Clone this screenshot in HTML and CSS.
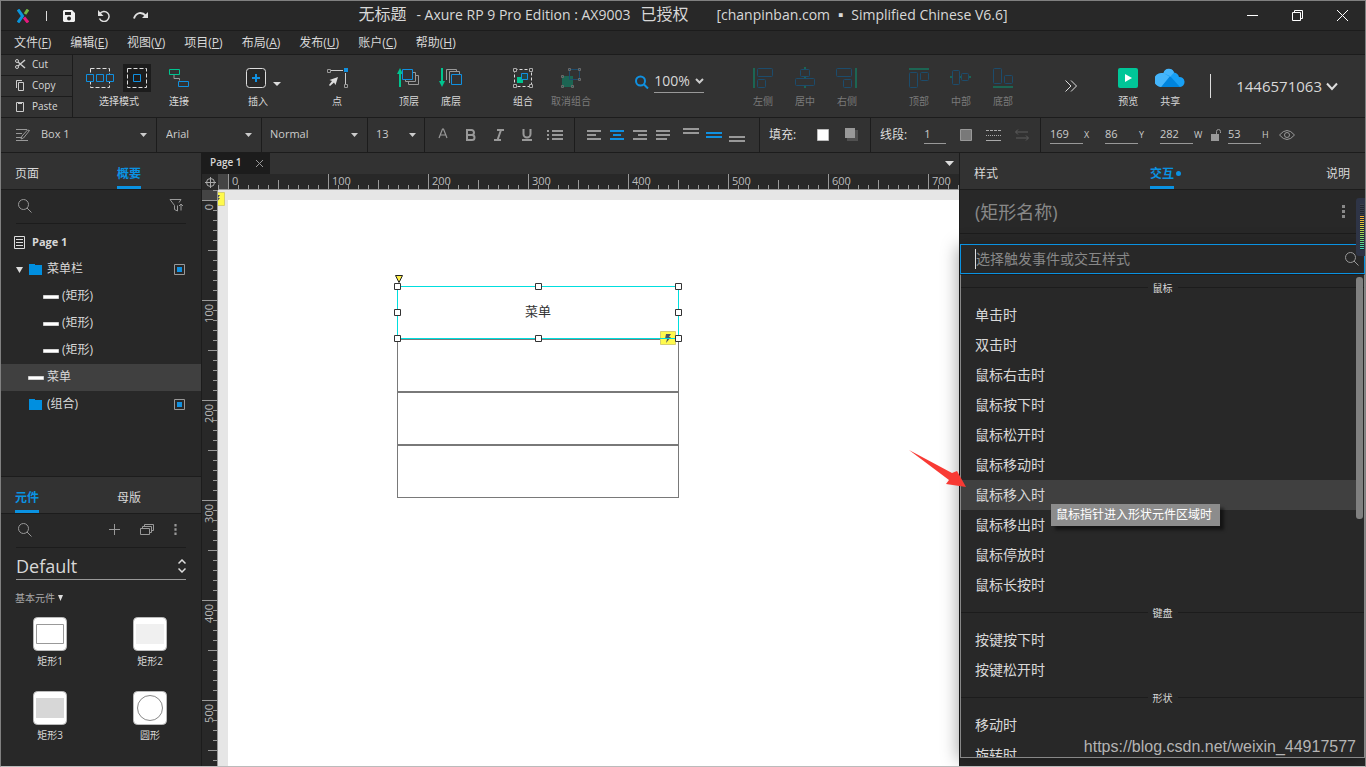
FILE: index.html
```html
<!DOCTYPE html>
<html lang="zh-CN">
<head>
<meta charset="utf-8">
<title>无标题 - Axure RP 9 Pro Edition</title>
<link rel="stylesheet" href="styles.css">
</head>
<body>
<svg class="defs" width="0" height="0" aria-hidden="true">
  <symbol id="search" viewBox="0 0 14 14"><circle cx="5.500" cy="5.500" r="5" fill="none" stroke="currentColor"/><path d="M9 9l4.500 4.500" stroke="currentColor" fill="none"/></symbol>
  <symbol id="caret" viewBox="0 0 7 4"><path d="M0 0h7L3.500 4z" fill="currentColor"/></symbol>
  <symbol id="dots" viewBox="0 0 3 13"><path d="M0 0h3v3H0zM0 5h3v3H0zM0 10h3v3H0z" fill="currentColor"/></symbol>
  <symbol id="folder" viewBox="0 0 13 11"><path d="M0 0h6v1h7v10H0z" fill="#008fe0"/></symbol>
  <symbol id="bar" viewBox="0 0 16 4"><path d="M.5.5h15v3H.5z" fill="#fff" stroke="#d0d0d0"/></symbol>
  <symbol id="bolt" viewBox="0 0 16 14"><path d="M.5.5h15v13H.5z" fill="#fffa4d" stroke="#d6cf70"/><path d="M6 3h5L9 6h2l-5 6 1-4H5z" fill="#4d5560"/></symbol>
  <symbol id="vis" viewBox="0 0 11 11"><path d="M.5.5h10v10H.5z" fill="none" stroke="#999"/><path d="M3 3h5v5H3z" fill="#1090e0"/></symbol>
</svg>

<header class="titlebar">
  <div class="quick">
    <svg class="logo" width="12" height="14" viewBox="0 0 12 14" fill="none" stroke-width="3"><path d="M1 .5l4.500 6.500L1 13.500" stroke="#0a95dc"/><path d="M11 .5L8 5" stroke="#6fb43f"/><path d="M7 8.500l4 5" stroke="#e5187d"/></svg>
    <span class="quick-line"></span>
    <button class="plain" aria-label="保存"><svg width="12" height="12" viewBox="0 0 12 12"><path fill="#f0f0f0" fill-rule="evenodd" d="M1 0h8l3 3v8l-1 1H1l-1-1V1zM2 2v3h6V2zM6 6.500a2 2 0 1 0 0 4 2 2 0 0 0 0-4z"/></svg></button>
    <button class="plain" aria-label="撤销"><svg width="12" height="12" viewBox="0 0 12 12"><path d="M2 3.500a5 5 0 1 1-.5 5" fill="none" stroke="#e0e0e0" stroke-width="1.500"/><path d="M0 0v6h5.500z" fill="#e0e0e0"/></svg></button>
    <button class="plain" aria-label="重做"><svg width="16" height="9" viewBox="0 0 16 9"><path d="M1 7.500C3 1 9 .5 13 5" fill="none" stroke="#e0e0e0" stroke-width="2"/><path d="M15 1v6H9z" fill="#e0e0e0"/></svg></button>
  </div>
  <h1><span class="zh">无标题</span><span>- Axure RP 9 Pro Edition : AX9003</span><span class="zh">已授权</span><span class="build">[chanpinban.com ▪ Simplified Chinese V6.6]</span></h1>
  <div class="winbtns">
    <button class="plain" aria-label="最小化"><svg width="11" height="11"><path d="M0 5.500h11" stroke="#fff"/></svg></button>
    <button class="plain" aria-label="还原"><svg width="11" height="11" fill="none" stroke="#fff"><path d="M.5 2.500h8v8h-8zM2.500 2.500v-2h8v8h-2"/></svg></button>
    <button class="plain" aria-label="关闭"><svg width="11" height="11" stroke="#fff"><path d="M0 0l11 11M11 0L0 11"/></svg></button>
  </div>
</header>

<nav class="menubar">
  <button class="plain">文件(<u>F</u>)</button>
  <button class="plain">编辑(<u>E</u>)</button>
  <button class="plain">视图(<u>V</u>)</button>
  <button class="plain">项目(<u>P</u>)</button>
  <button class="plain">布局(<u>A</u>)</button>
  <button class="plain">发布(<u>U</u>)</button>
  <button class="plain">账户(<u>C</u>)</button>
  <button class="plain">帮助(<u>H</u>)</button>
</nav>

<div class="toolbar">
  <div class="clip">
    <button class="plain"><svg width="11" height="10" viewBox="0 0 11 10" fill="none" stroke="#ccc"><path d="M3 3l7 6M3 7l7-6" stroke-width="1.500"/><circle cx="2" cy="2" r="1.500"/><circle cx="2" cy="8" r="1.500"/></svg>Cut</button>
    <button class="plain"><svg width="11" height="11" viewBox="0 0 11 11" fill="none" stroke="#ccc"><path d="M3.500 2.500h5v8h-5zM1.500 8V.5H7"/></svg>Copy</button>
    <button class="plain"><svg width="11" height="11" viewBox="0 0 11 11" fill="none" stroke="#ccc"><path d="M1.500 1.500h7v9h-7z"/><path d="M3 2h4" stroke-width="2"/></svg>Paste</button>
  </div>
  <div class="tools">
    <div class="set set-select">
      <div class="tool-double">
        <div class="pair">
          <button class="plain" aria-label="相交选中"><svg width="30" height="30" viewBox="0 0 30 30" fill="none"><rect x="5.500" y="5.500" width="19" height="19" stroke="#ddd" stroke-dasharray="4 2"/><path d="M1.500 11.500h7v7h-7zM11.500 11.500h7v7h-7zM21.500 11.500h7v7h-7z" fill="#323232" stroke="#1090e0"/></svg></button>
          <button class="plain" aria-label="包含选中"><svg width="30" height="30" viewBox="0 0 30 30" fill="none"><path d="M1 1h28v28H1z" fill="#1c1c1c"/><rect x="5.500" y="5.500" width="19" height="19" stroke="#ddd" stroke-dasharray="4 2"/><path d="M11.500 11.500h7v7h-7z" stroke="#1090e0"/></svg></button>
        </div>
        <span>选择模式</span>
      </div>
      <button class="tool"><svg width="30" height="30" viewBox="0 0 30 30" fill="none"><path d="M10 11.500v4h5.500v2" stroke="#999"/><path d="M5.500 6.500h10v5h-10z" stroke="#00c48f"/><path d="M14.500 18.500h10v5h-10z" stroke="#1090e0"/></svg>连接</button>
    </div>
    <button class="tool tool-wide"><svg width="56" height="30" viewBox="0 0 56 30"><rect x="16.500" y="5.500" width="19" height="19" rx="3" fill="#282828" stroke="#ddd"/><path d="M22 15h8M26 11v8" stroke="#1090e0" stroke-width="2"/><path d="M43 19h8l-4 4z" fill="#ddd"/></svg>插入</button>
    <button class="tool"><svg width="30" height="30" viewBox="0 0 30 30" fill="none"><path d="M8 7.500h13M23.500 10v12" stroke="#ccc"/><path d="M5.500 6.500h3v3h-3zM22.500 21.500h3v3h-3z" stroke="#999"/><path d="M22 5h4v4h-4z" fill="#1090e0"/><path d="M16 14l-2.500 8-1.500-2.500-4 3.500-1-1 3-4-2.500-1z" fill="#ddd"/></svg>点</button>
    <div class="set">
      <button class="tool"><svg width="30" height="30" viewBox="0 0 30 30" fill="none"><path d="M6 24V9" stroke="#00c48f" stroke-width="2"/><path d="M3 11l3-6 3 6z" fill="#00c48f"/><path d="M21 12.500h3.500v9h-10V19M18 9.500h3.500v9h-10V16" stroke="#999"/><path d="M8.500 6.500h10v10h-10z" fill="#323232" stroke="#1090e0"/></svg>顶层</button>
      <button class="tool"><svg width="30" height="30" viewBox="0 0 30 30" fill="none"><path d="M6 5v15" stroke="#00c48f" stroke-width="2"/><path d="M3 18l3 6 3-6z" fill="#00c48f"/><path d="M10.500 17V6.500h10V9M13.500 20V8.500h10V11" stroke="#999"/><path d="M15.500 11.500h10v10h-10z" fill="#323232" stroke="#1090e0"/></svg>底层</button>
    </div>
    <div class="set set-group">
      <button class="tool"><svg width="30" height="30" viewBox="0 0 30 30" fill="none"><rect x="6.500" y="6.500" width="17" height="17" stroke="#ddd" stroke-dasharray="3 2"/><path d="M5.500 5.500h3v3h-3zM21.500 5.500h3v3h-3zM5.500 21.500h3v3h-3zM21.500 21.500h3v3h-3z" fill="#323232" stroke="#aaa"/><path d="M9 14h6v6H9z" fill="#00c48f"/><path d="M13.500 10.500h6v6h-6z" fill="#244" stroke="#1090e0"/></svg>组合</button>
      <button class="tool off"><svg width="30" height="30" viewBox="0 0 30 30" fill="none"><path d="M6 13h11v11H6z" fill="#1c6553"/><path d="M13.500 6.500h10v10h-10z" stroke="#1c4c6c"/><path d="M12.500 5.500h2v2h-2zM22.500 5.500h2v2h-2zM22.500 15.500h2v2h-2zM5.500 12.500h2v2h-2zM5.500 22.500h2v2h-2zM15.500 22.500h2v2h-2z" stroke="#6a6a6a"/></svg>取消组合</button>
    </div>
    <div class="zoom">
      <svg width="14" height="14" viewBox="0 0 14 14" fill="none" stroke="#1090e0" stroke-width="2"><circle cx="5.500" cy="6" r="4.500"/><path d="M9 9.500l4 4"/></svg>
      <button class="plain zoom-val">100%<svg width="9" height="6" viewBox="0 0 9 6"><path d="M1 1l3.500 3.500L8 1" fill="none" stroke="#ccc" stroke-width="2"/></svg></button>
    </div>
    <div class="set">
      <button class="tool off"><svg width="30" height="30" viewBox="0 0 30 30" fill="none" stroke="#1c4c6c"><path d="M6 5v20" stroke="#1c6553" stroke-width="2"/><rect x="9.500" y="5.500" width="15" height="8" rx="1"/><rect x="9.500" y="16.500" width="8" height="8" rx="1"/></svg>左侧</button>
      <button class="tool off"><svg width="30" height="30" viewBox="0 0 30 30" fill="none" stroke="#1c4c6c"><path d="M15 4v3M15 13v3M15 22v3" stroke="#1c6553" stroke-width="2"/><rect x="10.500" y="6.500" width="9" height="7" rx="1"/><rect x="5.500" y="15.500" width="19" height="7" rx="1"/></svg>居中</button>
      <button class="tool off"><svg width="30" height="30" viewBox="0 0 30 30" fill="none" stroke="#1c4c6c"><path d="M24 5v20" stroke="#1c6553" stroke-width="2"/><rect x="4.500" y="5.500" width="15" height="8" rx="1"/><rect x="11.500" y="16.500" width="8" height="8" rx="1"/></svg>右侧</button>
    </div>
    <div class="set">
      <button class="tool off"><svg width="30" height="30" viewBox="0 0 30 30" fill="none" stroke="#1c4c6c"><path d="M5 6h20" stroke="#1c6553" stroke-width="2"/><rect x="5.500" y="9.500" width="8" height="15" rx="1"/><rect x="16.500" y="9.500" width="8" height="8" rx="1"/></svg>顶部</button>
      <button class="tool off"><svg width="30" height="30" viewBox="0 0 30 30" fill="none" stroke="#1c4c6c"><path d="M4 14h3M13 14h3M22 14h3" stroke="#1c6553" stroke-width="2"/><rect x="6.500" y="7.500" width="7" height="14" rx="1"/><rect x="15.500" y="10.500" width="7" height="7" rx="1"/></svg>中部</button>
      <button class="tool off"><svg width="30" height="30" viewBox="0 0 30 30" fill="none" stroke="#1c4c6c"><path d="M5 24h20" stroke="#1c6553" stroke-width="2"/><rect x="5.500" y="5.500" width="8" height="15" rx="1"/><rect x="16.500" y="12.500" width="8" height="8" rx="1"/></svg>底部</button>
    </div>
    <button class="plain more" aria-label="更多"><svg width="12" height="12" viewBox="0 0 12 12" fill="none" stroke="#ddd"><path d="M.5.5L6 6 .5 11.500M6 .5L11.500 6 6 11.500"/></svg></button>
    <div class="set set-share">
      <button class="tool"><svg width="30" height="30" viewBox="0 0 30 30"><rect x="5" y="5" width="20" height="20" rx="2" fill="#00c698"/><path d="M12 11v8l7-4z" fill="#fff"/></svg>预览</button>
      <button class="tool"><svg width="30" height="30" viewBox="0 0 30 30"><path d="M6 24a6 6 0 0 1 .5-13.500h2A5.500 5.500 0 0 1 19 9.500a6 6 0 0 1 5 4.500 5 5 0 0 1 1 10z" fill="#18a0f5"/><path d="M6 24L15 13l10 11z" fill="#0084dd"/><path d="M6 24L15 13l-6.500-3h-2A6 6 0 0 0 6 24zM8.500 10A5.500 5.500 0 0 1 19 9.500L15 14z" fill="#45b5fb"/></svg>共享</button>
    </div>
    <span class="rule"></span>
    <button class="plain account">1446571063<svg width="12" height="9" viewBox="0 0 12 9"><path d="M1 1.500L6 7l5-5.500" fill="none" stroke="#ddd" stroke-width="2"/></svg></button>
  </div>
</div>

<div class="props">
  <div class="cell cell-style">
    <svg width="16" height="14" viewBox="0 0 16 14" fill="none" stroke="#999"><path d="M1 1.500h11M1 5.500h6M1 9.500h5M1 12.500h12M14.500 2.500l-6 7.500-2.500 1 1-3 5.500-6z"/></svg>
    <select aria-label="样式"><option>Box 1</option></select><svg class="caret" width="7" height="4"><use href="#caret"/></svg>
  </div>
  <div class="cell cell-font"><select aria-label="字体"><option>Arial</option></select><svg class="caret" width="7" height="4"><use href="#caret"/></svg></div>
  <div class="cell cell-font"><select aria-label="字形"><option>Normal</option></select><svg class="caret" width="7" height="4"><use href="#caret"/></svg></div>
  <div class="cell cell-size"><select aria-label="字号"><option>13</option></select><svg class="caret" width="7" height="4"><use href="#caret"/></svg></div>
  <div class="cell cell-fmt">
    <button class="plain" aria-label="颜色"><svg width="16" height="14" viewBox="0 0 16 14"><path d="M4 10L7.500 1h1L12 10M5.500 7h5" fill="none" stroke="#999" stroke-width="1.200"/></svg></button>
    <button class="plain" aria-label="粗体"><svg width="16" height="14" viewBox="0 0 16 14"><path d="M4 2h4.500a2.500 2.500 0 0 1 0 5H4h5a2.500 2.500 0 0 1 0 5H4z" fill="none" stroke="#999" stroke-width="2"/></svg></button>
    <button class="plain" aria-label="斜体"><svg width="16" height="14" viewBox="0 0 16 14"><path d="M6 2h7M3 12h7M10 2L6.500 12" fill="none" stroke="#999" stroke-width="2"/></svg></button>
    <button class="plain" aria-label="下划线"><svg width="16" height="14" viewBox="0 0 16 14"><path d="M4.500 1v5a3.500 3.500 0 0 0 7 0V1M3 12h10" fill="none" stroke="#999" stroke-width="2"/></svg></button>
    <button class="plain" aria-label="列表"><svg width="16" height="14" viewBox="0 0 16 14"><path d="M5 3h11M5 7h11M5 11h11" stroke="#999" stroke-width="2"/><path d="M0 2h2v2H0zM0 6h2v2H0zM0 10h2v2H0z" fill="#999"/></svg></button>
  </div>
  <div class="cell cell-align">
    <button class="plain" aria-label="左对齐"><svg width="16" height="14" stroke="#999" stroke-width="2"><path d="M1 3h14M1 7h9M1 11h14"/></svg></button>
    <button class="plain" aria-label="居中对齐"><svg width="16" height="14" stroke="#1090e0" stroke-width="2"><path d="M1 3h14M4 7h8M1 11h14"/></svg></button>
    <button class="plain" aria-label="右对齐"><svg width="16" height="14" stroke="#999" stroke-width="2"><path d="M1 3h14M6 7h9M1 11h14"/></svg></button>
    <button class="plain" aria-label="两端对齐"><svg width="16" height="14" stroke="#999" stroke-width="2"><path d="M1 3h14M1 7h14M1 11h11"/></svg></button>
    <button class="plain gap" aria-label="顶端"><svg width="16" height="14" stroke="#999" stroke-width="2"><path d="M0 1h16M0 5h16"/></svg></button>
    <button class="plain" aria-label="居中"><svg width="16" height="14" stroke="#1090e0" stroke-width="2"><path d="M0 5h16M0 9h16"/></svg></button>
    <button class="plain" aria-label="底端"><svg width="16" height="14" stroke="#999" stroke-width="2"><path d="M0 9h16M0 13h16"/></svg></button>
  </div>
  <div class="cell cell-fill">
    <span class="lbl">填充:</span>
    <button class="plain" aria-label="填充颜色"><svg width="12" height="12"><path d="M.5.5h11v11H.5z" fill="#fff" stroke="#bbb"/></svg></button>
    <button class="plain" aria-label="阴影"><svg width="14" height="14"><path d="M2 2h11v11H2z" fill="#505050"/><path d="M0 0h10v10H0z" fill="#999"/></svg></button>
  </div>
  <div class="cell cell-line">
    <label class="lbl" for="lw">线段:</label>
    <input id="lw" class="num num-sm" value="1">
    <button class="plain" aria-label="线段颜色"><svg width="12" height="12"><path d="M.5.5h11v11H.5z" fill="#797979" stroke="#999"/></svg></button>
    <button class="plain" aria-label="线型"><svg width="15" height="11" stroke="#aaa"><path d="M0 .5h15" stroke-dasharray="3 1"/><path d="M0 5.500h15" stroke-dasharray="1 1"/><path d="M0 10.500h15"/></svg></button>
    <button class="plain" aria-label="箭头"><svg width="14" height="12" fill="none" stroke="#5c5c5c"><path d="M3 .5L.5 3 3 5.500M1 3h12M11 6.500L13.500 9 11 11.500M1 9h12"/></svg></button>
  </div>
  <div class="cell cell-pos">
    <div class="coord"><input id="px" class="num" value="169"><label for="px">X</label></div>
    <div class="coord"><input id="py" class="num" value="86"><label for="py">Y</label></div>
    <div class="coord"><input id="pw" class="num" value="282"><label for="pw">W</label></div>
    <button class="plain lock" aria-label="锁定比例"><svg width="10" height="12" viewBox="0 0 10 12"><path d="M0 5h8v7H0z" fill="#999"/><path d="M5.500 5V2.500a2 2 0 0 1 4 0V4" fill="none" stroke="#999"/></svg></button>
    <div class="coord"><input id="ph" class="num" value="53"><label for="ph">H</label></div>
    <button class="plain eye" aria-label="可见性"><svg width="16" height="10" viewBox="0 0 16 10" fill="none" stroke="#999"><path d="M.5 5Q8-4 15.500 5 8 14 .5 5z"/><circle cx="8" cy="5" r="2.500"/></svg></button>
  </div>
</div>

<main class="main">
  <aside class="left">
    <section class="outline">
      <div class="tabs"><button class="tab">页面</button><button class="tab on">概要</button></div>
      <div class="search-row">
        <svg width="14" height="14"><use href="#search"/></svg>
        <svg width="14" height="13" viewBox="0 0 14 13" fill="none" stroke="#999"><path d="M8.500 6.500V12l-3-1.500v-4L1 .5h11L10 3.500M12 11.500V5M10 7l2-2 2 2"/></svg>
      </div>
      <ul class="tree">
        <li class="page"><svg width="11" height="13" fill="none" stroke="#ddd"><path d="M.5.5h10v12H.5zM2 3.500h7M2 6.500h7M2 9.500h7"/></svg><b>Page 1</b></li>
        <li class="lv1"><svg class="twist" width="7" height="6" viewBox="0 0 7 6"><path d="M0 0h7L3.500 6z" fill="#ddd"/></svg><svg width="13" height="11"><use href="#folder"/></svg><span>菜单栏</span><svg class="end" width="11" height="11"><use href="#vis"/></svg></li>
        <li class="lv2"><svg width="16" height="4"><use href="#bar"/></svg><span>(矩形)</span></li>
        <li class="lv2"><svg width="16" height="4"><use href="#bar"/></svg><span>(矩形)</span></li>
        <li class="lv2"><svg width="16" height="4"><use href="#bar"/></svg><span>(矩形)</span></li>
        <li class="lv1b sel"><svg width="16" height="4"><use href="#bar"/></svg><span>菜单</span></li>
        <li class="lv1b"><svg width="13" height="11"><use href="#folder"/></svg><span>(组合)</span><svg class="end" width="11" height="11"><use href="#vis"/></svg></li>
      </ul>
    </section>
    <section class="library">
      <div class="tabs"><button class="tab on">元件</button><button class="tab">母版</button></div>
      <div class="search-row lib-search">
        <svg width="14" height="14"><use href="#search"/></svg>
        <div class="lib-actions">
          <button class="plain" aria-label="添加"><svg width="11" height="11" stroke="#999"><path d="M0 5.500h11M5.500 0v11"/></svg></button>
          <button class="plain" aria-label="元件库"><svg width="14" height="11" fill="none" stroke="#999"><path d="M.5 4.500h9v6h-9zM2.500 4.500v-2h9v6h-2M4.500 2.500v-2h9v6h-2"/></svg></button>
          <button class="plain" aria-label="选项"><svg width="3" height="11" viewBox="0 0 3 13"><use href="#dots"/></svg></button>
        </div>
      </div>
      <div class="lib-pick"><select aria-label="元件库"><option>Default</option></select><svg width="8" height="14" viewBox="0 0 8 14" fill="none" stroke="#ddd" stroke-width="1.500"><path d="M.5 4.500L4 1l3.500 3.500M.5 9.500L4 13l3.500-3.500"/></svg></div>
      <button class="plain cat">基本元件<svg width="5" height="6" viewBox="0 0 5 6"><path d="M0 0h5L2.500 6z" fill="#ddd"/></svg></button>
      <div class="widgets">
        <button class="widget"><svg width="34" height="34"><rect x=".5" y=".5" width="33" height="33" rx="4" fill="#fff" stroke="#bbb"/><path d="M3.500 7.500h27v19h-27z" fill="#fff" stroke="#999"/></svg>矩形1</button>
        <button class="widget"><svg width="34" height="34"><rect x=".5" y=".5" width="33" height="33" rx="4" fill="#fff" stroke="#bbb"/><path d="M3 7h28v20H3z" fill="#f0f0f0"/></svg>矩形2</button>
        <button class="widget"><svg width="34" height="34"><rect x=".5" y=".5" width="33" height="33" rx="4" fill="#fff" stroke="#bbb"/><path d="M3 7h28v20H3z" fill="#d7d7d7"/></svg>矩形3</button>
        <button class="widget"><svg width="34" height="34"><rect x=".5" y=".5" width="33" height="33" rx="4" fill="#fff" stroke="#bbb"/><circle cx="17" cy="17" r="12.500" fill="#fff" stroke="#888"/></svg>圆形</button>
      </div>
    </section>
  </aside>

  <section class="center">
    <div class="doc-tabs">
      <div class="doc-tab"><span>Page 1</span><button class="plain" aria-label="关闭页面"><svg width="7" height="7" stroke="#999"><path d="M0 0l7 7M7 0L0 7"/></svg></button></div>
      <svg width="9" height="5" viewBox="0 0 9 5"><path d="M0 0h9L4.500 5z" fill="#ddd"/></svg>
    </div>
    <div class="stage">
      <div class="corner"><svg width="11" height="11" fill="none" stroke="#aaa"><circle cx="5.500" cy="5.500" r="4"/><path d="M5.500 0v11M0 5.500h11"/></svg></div>
      <svg class="ruler-h" height="16" aria-hidden="true">
        <defs><pattern id="th" x="10" y="0" width="100" height="15" patternUnits="userSpaceOnUse"><path d="M.5 0v15M50.500 6v9M10.500 11v4M20.500 11v4M30.500 11v4M40.500 11v4M60.500 11v4M70.500 11v4M80.500 11v4M90.500 11v4" stroke="#999"/></pattern></defs>
        <rect width="10" height="15" fill="#444"/>
        <rect width="100%" height="15" fill="url(#th)"/><path d="M.5 11v4" stroke="#999"/>
        <g class="nums"><text x="14" y="11">0</text><text x="114" y="11">100</text><text x="214" y="11">200</text><text x="314" y="11">300</text><text x="414" y="11">400</text><text x="514" y="11">500</text><text x="614" y="11">600</text><text x="714" y="11">700</text></g>
      </svg>
      <svg class="ruler-v" width="16" aria-hidden="true">
        <defs><pattern id="tv" x="0" y="10" width="15" height="100" patternUnits="userSpaceOnUse"><path d="M0 .5h15M6 50.500h9M11 10.500h4M11 20.500h4M11 30.500h4M11 40.500h4M11 60.500h4M11 70.500h4M11 80.500h4M11 90.500h4" stroke="#999"/></pattern></defs>
        <rect width="15" height="10" fill="#444"/>
        <rect width="15" height="100%" fill="url(#tv)"/>
        <g class="nums nums-v"><text transform="translate(11 14) rotate(-90)">0</text><text transform="translate(11 114) rotate(-90)">100</text><text transform="translate(11 214) rotate(-90)">200</text><text transform="translate(11 314) rotate(-90)">300</text><text transform="translate(11 414) rotate(-90)">400</text><text transform="translate(11 514) rotate(-90)">500</text></g>
      </svg>
      <div class="canvas">
        <svg class="page-note" width="16" height="14"><use href="#bolt"/></svg>
        <div class="paper">
          <div class="menu-widget">
            <div class="box box-sel">菜单</div>
            <div class="box"></div>
            <div class="box"></div>
            <div class="box"></div>
            <svg class="badge" width="16" height="14"><use href="#bolt"/></svg>
            <svg class="overlay" width="290" height="68" viewBox="-4 -12 290 68" fill="#fff" stroke="#333">
              <path d="M-1.500 -10.500h7l-3.500 7z" fill="#fff04a" stroke="#222"/>
              <path d="M.5.500h281v52H.5z" fill="none" stroke="#00dede"/>
              <path d="M-2.500 -2.500h6v6h-6zM138.500 -2.500h6v6h-6zM278.500 -2.500h6v6h-6zM-2.500 23.500h6v6h-6zM278.500 23.500h6v6h-6zM-2.500 49.500h6v6h-6zM138.500 49.500h6v6h-6zM278.500 49.500h6v6h-6z"/>
            </svg>
          </div>
        </div>
      </div>
    </div>
  </section>

  <aside class="right">
    <div class="tabs"><button class="tab">样式</button><button class="tab on dot">交互</button><button class="tab">说明</button></div>
    <div class="name-row"><input aria-label="矩形名称" placeholder="(矩形名称)"><svg width="3" height="13"><use href="#dots"/></svg></div>
    <div class="popup">
      <div class="event-search"><input aria-label="搜索事件" placeholder="选择触发事件或交互样式"><svg width="14" height="14"><use href="#search"/></svg></div>
      <div class="events">
        <h2>鼠标</h2>
        <button>单击时</button>
        <button>双击时</button>
        <button>鼠标右击时</button>
        <button>鼠标按下时</button>
        <button>鼠标松开时</button>
        <button>鼠标移动时</button>
        <button class="hover">鼠标移入时</button>
        <button>鼠标移出时</button>
        <button>鼠标停放时</button>
        <button>鼠标长按时</button>
        <h2>键盘</h2>
        <button>按键按下时</button>
        <button>按键松开时</button>
        <h2>形状</h2>
        <button>移动时</button>
        <button>旋转时</button>
        <span class="thumb"></span>
        <div class="tip" role="tooltip">鼠标指针进入形状元件区域时</div>
      </div>
      <svg class="arrow" width="58" height="38" viewBox="0 0 58 38"><path d="M0 0l43 23 5-2 9 16-20-3 3-4z" fill="#f83a34"/></svg>
    </div>
    <svg class="meter" width="10" height="58" viewBox="0 0 10 58" aria-hidden="true">
      <defs><linearGradient id="lvl" gradientUnits="userSpaceOnUse" x1="0" y1="18" x2="0" y2="51"><stop offset="0" stop-color="#f0a838"/><stop offset=".3" stop-color="#dcd040"/><stop offset=".6" stop-color="#90d860"/><stop offset="1" stop-color="#38d8b8"/></linearGradient></defs>
      <rect width="14" height="58" rx="3" fill="#2e3446"/>
      <rect x="4" y="6" width="4" height="46" fill="#20242e"/>
      <path d="M4 6.500h4M4 8.500h4M4 10.500h4M4 12.500h4M4 14.500h4M4 16.500h4" stroke="#3a3f4a"/>
      <path d="M4 18.500h4M4 20.500h4M4 22.500h4M4 24.500h4M4 26.500h4M4 28.500h4M4 30.500h4M4 32.500h4M4 34.500h4M4 36.500h4M4 38.500h4M4 40.500h4M4 42.500h4M4 44.500h4M4 46.500h4M4 48.500h4M4 50.500h4" stroke="url(#lvl)"/>
    </svg>
    <div class="watermark">https://blog.csdn.net/weixin_44917577</div>
  </aside>
</main>
</body>
</html>
```
FILE: styles.css
```css
* { box-sizing: border-box; }
body {
  margin: 0;
  height: 100vh;
  display: flex;
  flex-direction: column;
  overflow: hidden;
  background: #282828;
  border: 1px solid #808080;
  border-bottom-color: #bbb;
  color: #d8d8d8;
  font: 11px/14px "Open Sans", "Noto Sans CJK SC", sans-serif;
}
.defs { position: absolute; }
svg { display: block; flex: none; }
button, input, select {
  font: inherit;
  color: inherit;
  background: none;
  border: 0;
  padding: 0;
  margin: 0;
  appearance: none;
  outline: 0;
}
.plain { display: flex; align-items: center; justify-content: center; }

/* title bar */
.titlebar {
  height: 30px;
  display: grid;
  grid-template-columns: 1fr auto 1fr;
  align-items: center;
  border-bottom: 1px solid #1c1c1c;
}
.titlebar h1 {
  display: flex;
  align-items: baseline;
  gap: 10px;
  margin: 0;
  padding-bottom: 3px;
  font-size: 14px;
  line-height: 24px;
  font-weight: 400;
  white-space: nowrap;
}
.titlebar .zh { font-size: 16px; }
.titlebar .build { margin-left: 18px; }
.quick { display: flex; align-items: center; padding-left: 16px; }
.quick-line { width: 1px; height: 10px; background: #ddd; margin: 0 16px 0 17px; }
.quick .plain { margin-right: 23px; }
.winbtns { display: flex; justify-content: flex-end; gap: 34px; padding-right: 17px; }

/* menu bar */
.menubar {
  height: 24px;
  display: flex;
  gap: 19px;
  padding-left: 13px;
  font-size: 12px;
  border-bottom: 1px solid #1c1c1c;
}

/* toolbar */
.toolbar {
  height: 63px;
  display: flex;
  background: #323232;
  border-bottom: 1px solid #1c1c1c;
  white-space: nowrap;
}
.clip {
  width: 72px;
  flex: none;
  display: flex;
  flex-direction: column;
  border-right: 1px solid #1c1c1c;
  font-size: 10px;
}
.clip .plain {
  flex: 1;
  justify-content: flex-start;
  gap: 6px;
  padding-left: 14px;
  padding-bottom: 2px;
  border-bottom: 1px solid #1c1c1c;
}
.clip .plain:last-child { border-bottom: 0; }
.tools { flex: 1; display: flex; gap: 30px; padding-left: 10px; }
.set { display: flex; }
.set-select { gap: 3px; }
.set-group { gap: 6px; }
.tool, .tool-double {
  width: 42px;
  display: flex;
  flex-direction: column;
  align-items: center;
  justify-content: flex-start;
  gap: 2px;
  padding-top: 8px;
  font-size: 10px;
  line-height: 12px;
}
.tool-double { width: 72px; }
.tool-wide { width: 56px; }
.off { color: #7a7a7a; }
.pair { display: flex; gap: 7px; padding-right: 2px; }
.zoom { width: 90px; display: flex; justify-content: center; align-items: center; gap: 5px; padding: 0 0 9px 5px; }
.zoom-val { font-size: 14px; line-height: 22px; gap: 5px; border-bottom: 1px solid #999; }
.more { width: 34px; margin-right: -11px; }
.set-share { margin-left: auto; }
.rule { width: 1px; height: 24px; background: #ddd; align-self: center; margin: 0 -5px 0 -11px; }
.account { font-size: 15px; gap: 4px; margin-right: 27px; }

/* property bar */
.props {
  height: 35px;
  display: flex;
  background: #323232;
  border-bottom: 1px solid #1c1c1c;
}
.cell { display: flex; align-items: center; border-right: 1px solid #1c1c1c; flex: none; color: #ccc; }
.cell select { flex: 1; min-width: 0; height: 18px; margin-bottom: 2px; }
.cell .caret { color: #ccc; }
.cell-style { width: 156px; gap: 10px; padding: 0 9px 0 14px; }
.cell-font { width: 105px; padding: 0 9px 0 9px; }
.cell-font + .cell-font { width: 106px; padding-left: 8px; }
.cell-size { width: 57px; padding: 0 8px; }
.cell-fmt { width: 150px; justify-content: center; gap: 12px; padding-right: 2px; }
.cell-align { width: 185px; padding-left: 11px; gap: 7px; }
.cell-align .gap { margin-left: 5px; }
.cell-fill { width: 111px; padding-left: 9px; gap: 16px; }
.cell-fill .lbl { margin-right: 5px; }
.cell-line { width: 170px; padding-left: 9px; gap: 14px; }
.cell-line .lbl { margin-right: 3px; }
.lbl { font-size: 12px; color: #ddd; }
.num { width: 33px; height: 18px; padding-bottom: 2px; border-bottom: 1px solid #999; }
.num-sm { width: 22px; }
.cell-pos { flex: 1; border-right: 0; padding-left: 9px; gap: 9px; }
.coord { display: flex; align-items: center; width: 46px; gap: 1px; }
.coord label { font-size: 9px; }
.lock { margin: 0 -2px 0 -4px; }
.eye { margin-left: -4px; }

/* tabs */
.tabs {
  display: flex;
  justify-content: space-between;
  height: 37px;
  flex: none;
  background: #323232;
  border-bottom: 1px solid #1c1c1c;
  font-size: 12px;
}
.tab { position: relative; display: flex; align-items: center; padding-top: 8px; border-bottom: 3px solid transparent; }
.tab.on { color: #0a92e2; border-color: #0a92e2; font-weight: 700; }
.dot::after {
  content: "";
  position: absolute;
  left: 26px;
  top: 18px;
  width: 5px;
  height: 5px;
  border-radius: 50%;
  background: #0a92e2;
}

/* main */
.main { flex: 1; min-height: 0; display: flex; }
.left {
  width: 201px;
  flex: none;
  display: flex;
  flex-direction: column;
  border-right: 1px solid #1c1c1c;
}
.left .tabs { padding: 0 60px 0 14px; }
.outline { flex: 1; min-height: 0; }
.search-row {
  display: flex;
  align-items: center;
  justify-content: space-between;
  height: 34px;
  margin: 0 15px;
  padding: 0 3px 2px 2px;
  color: #999;
  border-bottom: 1px solid #1c1c1c;
}
.tree { list-style: none; margin: 5px 0 0; padding: 0; font-size: 12px; }
.tree li { display: flex; align-items: center; gap: 5px; height: 27px; padding-right: 16px; }
.tree b, .tree span { padding-bottom: 2px; }
.tree .page { padding-left: 13px; gap: 7px; font-size: 11px; }
.tree .lv1 { padding-left: 15px; }
.tree .twist { margin-right: 1px; }
.tree .lv1b { padding-left: 28px; }
.tree .lv2 { padding-left: 42px; gap: 3px; }
.tree .sel { gap: 3px; padding-left: 27px; background: #404040; }
.tree .end { margin-left: auto; }
.library { flex: none; height: 290px; border-top: 1px solid #1c1c1c; }
.lib-search { padding-right: 9px; }
.lib-actions { display: flex; gap: 20px; align-items: center; }
.lib-pick {
  display: flex;
  align-items: center;
  justify-content: space-between;
  height: 32px;
  margin: 0 15px;
  padding-top: 4px;
  border-bottom: 1px solid #999;
}
.lib-pick select { font-size: 18px; height: 28px; }
.cat { margin: 11px 0 0 14px; font-size: 10px; gap: 3px; color: #aaa; }
.widgets { display: grid; grid-template-columns: 100px 100px; row-gap: 24px; margin-top: 12px; margin-left: -1px; }
.widget { display: flex; flex-direction: column; align-items: center; gap: 4px; font-size: 10px; line-height: 12px; }

/* centre */
.center { flex: 1; min-width: 0; display: flex; flex-direction: column; background: #323232; }
.doc-tabs { height: 21px; flex: none; display: flex; justify-content: space-between; align-items: center; padding-right: 5px; }
.doc-tab {
  height: 21px;
  display: flex;
  align-items: center;
  gap: 14px;
  padding: 0 7px 0 8px;
  background: #1c1c1c;
  font-size: 10px;
  font-weight: 600;
}
.doc-tab span { padding-bottom: 3px; }
.stage { flex: 1; min-height: 0; display: grid; grid-template: 16px minmax(0, 1fr) / 16px minmax(0, 1fr); background: #282828; }
.corner { display: grid; place-items: center; }
.ruler-h { width: 100%; border-bottom: 1px solid #999; }
.ruler-v { height: 100%; border-right: 1px solid #999; }
.nums { fill: #bbb; font-size: 11px; }
.nums-v { text-anchor: end; }
.canvas { position: relative; padding: 10px 0 0 10px; background: #e6e6e6; display: flex; overflow: hidden; }
.paper { position: relative; flex: 1; background: #fff; }
.page-note { position: absolute; left: -9px; top: 2px; }
.menu-widget { position: absolute; left: 169px; top: 86px; width: 282px; }
.box { height: 53px; border: 1px solid #797979; }
.box-sel { display: flex; align-items: center; justify-content: center; padding-bottom: 4px; color: #333; font-size: 13px; }
.badge { position: absolute; right: 3px; top: 45px; }
.overlay { position: absolute; left: -4px; top: -12px; }

/* right */
.right {
  position: relative;
  width: 406px;
  flex: none;
  display: flex;
  flex-direction: column;
  border-left: 1px solid #1c1c1c;
}
.right .tabs { padding: 0 15px 0 14px; }
.name-row {
  display: flex;
  align-items: center;
  justify-content: space-between;
  height: 44px;
  flex: none;
  padding: 0 20px 0 15px;
  border-bottom: 1px solid #1c1c1c;
  color: #888;
}
.name-row input { font-size: 18px; line-height: 26px; flex: 1; }
input::placeholder { color: #888; opacity: 1; }
.popup {
  position: relative;
  flex: 1;
  min-height: 0;
  display: flex;
  flex-direction: column;
  margin: 10px 0 8px;
  background: #282828;
  box-shadow: -2px 2px 16px rgba(0, 0, 0, .35);
}
.event-search {
  display: flex;
  align-items: center;
  height: 30px;
  flex: none;
  border: 1px solid #0a92e2;
  padding: 0 5px 0 14px;
  color: #999;
}
.event-search input { flex: 1; font-size: 14px; line-height: 20px; height: 20px; border-left: 1px solid #ddd; }
.events {
  position: relative;
  flex: 1;
  min-height: 0;
  overflow: hidden;
  border: 1px solid #888;
  border-top: 1px solid #1c1c1c;
}
.events button {
  display: block;
  width: calc(100% - 8px);
  height: 30px;
  padding-left: 14px;
  text-align: left;
  font-size: 14px;
}
.events .hover { background: #404040; }
.events h2 {
  display: flex;
  align-items: center;
  gap: 5px;
  height: 25px;
  margin: 0;
  font-size: 10px;
  font-weight: 400;
}
.events h2::before, .events h2::after { content: ""; flex: 1; height: 1px; background: #1c1c1c; }
.thumb { position: absolute; right: 1px; top: 2px; width: 7px; height: 242px; border-radius: 3px; background: #808080; }
.tip {
  position: absolute;
  left: 90px;
  top: 229px;
  padding: 3px 8px 3px 5px;
  line-height: 16px;
  font-size: 12px;
  color: #fff;
  background: #8c8c8c;
  box-shadow: 4px 4px 3px rgba(0, 0, 0, .5);
}
.arrow { position: absolute; left: -51px; top: 206px; }
.meter { position: absolute; right: -1px; top: 45px; }
.watermark {
  position: absolute;
  right: 9px;
  bottom: 9px;
  font: 16px/20px "Liberation Sans", sans-serif;
  color: #b4b4b4;
}
```
